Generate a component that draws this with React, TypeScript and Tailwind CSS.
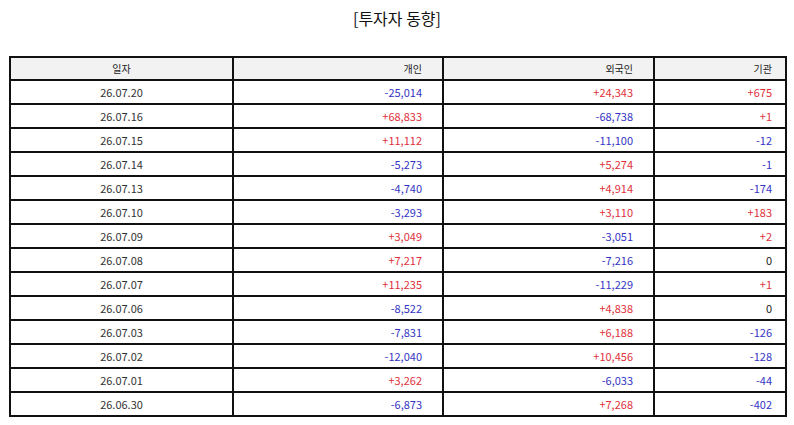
import React from "react";

type Row = [string, string, string, string];

const rows: Row[] = [
  ["26.07.20", "-25,014", "+24,343", "+675"],
  ["26.07.16", "+68,833", "-68,738", "+1"],
  ["26.07.15", "+11,112", "-11,100", "-12"],
  ["26.07.14", "-5,273", "+5,274", "-1"],
  ["26.07.13", "-4,740", "+4,914", "-174"],
  ["26.07.10", "-3,293", "+3,110", "+183"],
  ["26.07.09", "+3,049", "-3,051", "+2"],
  ["26.07.08", "+7,217", "-7,216", "0"],
  ["26.07.07", "+11,235", "-11,229", "+1"],
  ["26.07.06", "-8,522", "+4,838", "0"],
  ["26.07.03", "-7,831", "+6,188", "-126"],
  ["26.07.02", "-12,040", "+10,456", "-128"],
  ["26.07.01", "+3,262", "-6,033", "-44"],
  ["26.06.30", "-6,873", "+7,268", "-402"],
];

function color(v: string) {
  if (v.startsWith("+")) return "text-[#e0303a]";
  if (v.startsWith("-")) return "text-[#3434c4]";
  return "text-[#222]";
}

export default function App() {
  return (
    <div
      className="w-[794px] h-[425px] bg-white overflow-hidden"
      style={{ fontFamily: '"Noto Sans CJK KR", "Noto Sans", sans-serif' }}
    >
      <div className="h-[36px] pt-[6px] text-center text-[16px] leading-[24px] text-[#111]">
        [투자자 동향]
      </div>
      <div className="ml-[9px] mt-[20px] w-[778px] border-l-2 border-t-2 border-[#111]">
        <div className="grid grid-cols-[223px_210px_211px_132px] h-[23px] bg-[#f2f2f2] text-[10px] text-[#222]">
          <div className="border-r-2 border-b-2 border-[#111] flex items-center justify-center">일자</div>
          <div className="border-r-2 border-b-2 border-[#111] flex items-center justify-end pr-[20px]">개인</div>
          <div className="border-r-2 border-b-2 border-[#111] flex items-center justify-end pr-[20px]">외국인</div>
          <div className="border-r-2 border-b-2 border-[#111] flex items-center justify-end pr-[13px]">기관</div>
        </div>
        {rows.map((r) => (
          <div key={r[0]} className="grid grid-cols-[223px_210px_211px_132px] h-[24px] text-[11px]">
            <div className="border-r-2 border-b-2 border-[#111] flex items-center justify-center text-[#333]">{r[0]}</div>
            <div className={`border-r-2 border-b-2 border-[#111] flex items-center justify-end pr-[20px] ${color(r[1])}`}>{r[1]}</div>
            <div className={`border-r-2 border-b-2 border-[#111] flex items-center justify-end pr-[20px] ${color(r[2])}`}>{r[2]}</div>
            <div className={`border-r-2 border-b-2 border-[#111] flex items-center justify-end pr-[13px] ${color(r[3])}`}>{r[3]}</div>
          </div>
        ))}
      </div>
    </div>
  );
}
